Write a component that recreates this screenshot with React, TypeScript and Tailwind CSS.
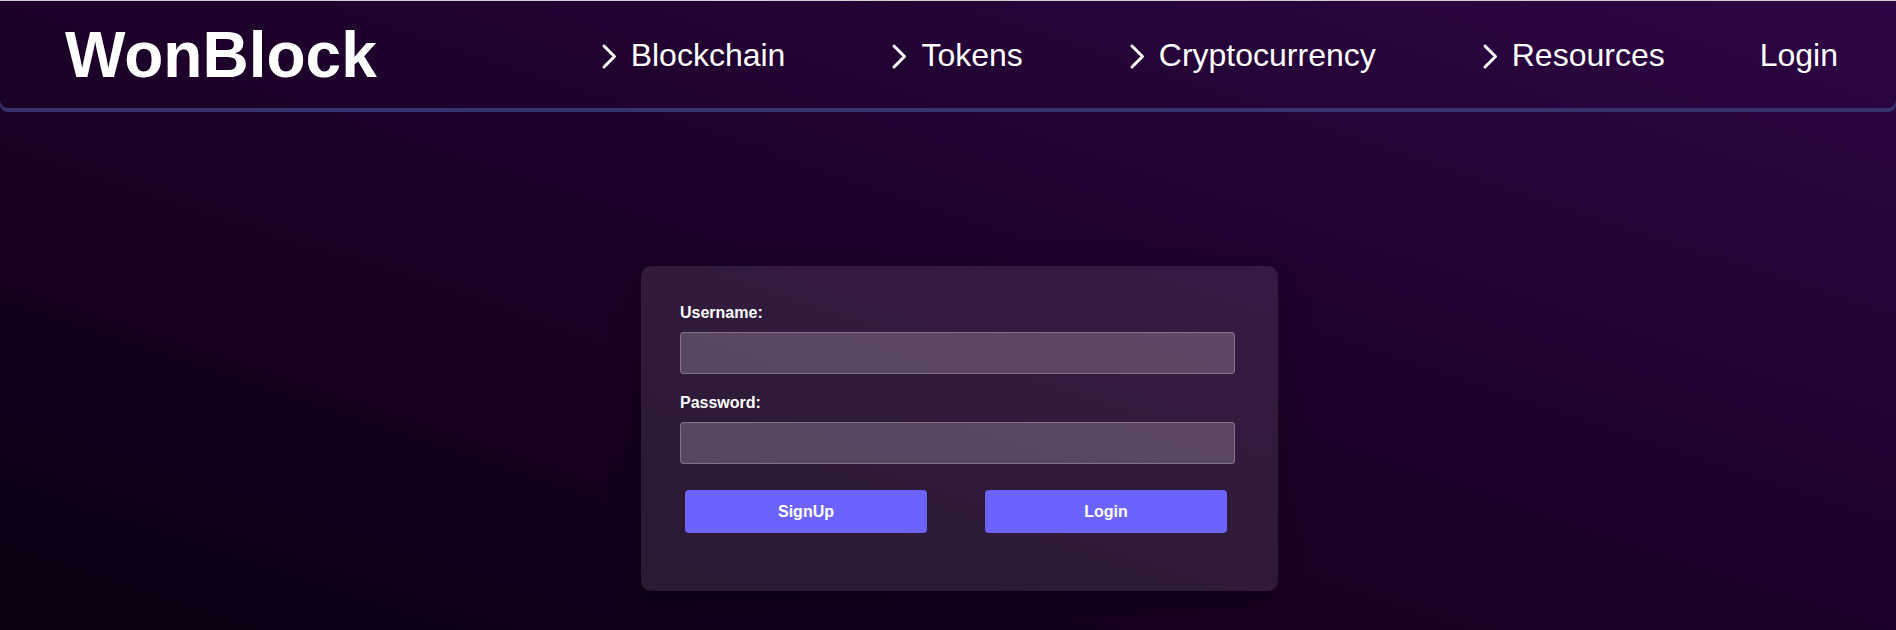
import React from 'react';

const navItems = ['Blockchain', 'Tokens', 'Cryptocurrency', 'Resources'];

const Chevron: React.FC = () => (
  <svg width="16" height="27" viewBox="0 0 16 27" fill="none" className="mt-[3px] shrink-0">
    <path d="M3 3 L13.5 13.5 L3 24" stroke="white" strokeWidth="3" strokeLinecap="round" strokeLinejoin="round" />
  </svg>
);

export default function App() {
  return (
    <div
      className="h-[630px] w-full overflow-hidden border-t border-[#cfcfcf] bg-[linear-gradient(to_top_right,#0a0010_0%,#1c0029_50%,#2e0645_100%)] text-white"
      style={{ fontFamily: '"Liberation Sans", Arial, sans-serif' }}
    >
      <nav className="flex h-[107px] items-center rounded-b-lg pl-[65px] pr-[58px] shadow-[0_4px_0_#38336f]">
        <h1 className="text-[64px] font-bold leading-none tracking-normal">WonBlock</h1>
        <ul className="ml-auto flex items-center gap-[106px] text-[32px] leading-none">
          {navItems.map((item) => (
            <li key={item} className="flex items-center gap-[14px]">
              <Chevron />
              <span>{item}</span>
            </li>
          ))}
          <li className="-ml-[11px]">Login</li>
        </ul>
      </nav>

      <main className="flex justify-center pl-[23px] pt-[158px]">
        <div className="w-[637px] rounded-[10px] bg-white/10 px-[39px] pb-[58px] pt-[38px] shadow-[0_8px_30px_rgba(0,0,0,0.35)]">
          <form className="flex flex-col">
            <label className="text-[16px] font-bold leading-[18px]">Username:</label>
            <input
              type="text"
              className="mt-[10px] h-[42px] w-[555px] rounded-[4px] border border-white/25 bg-white/20 px-3 outline-none"
            />
            <label className="mt-[20px] text-[16px] font-bold leading-[18px]">Password:</label>
            <input
              type="password"
              className="mt-[10px] h-[42px] w-[555px] rounded-[4px] border border-white/25 bg-white/20 px-3 outline-none"
            />
            <div className="mt-[26px] flex gap-[58px] pl-[5px]">
              <button type="button" className="h-[43px] w-[242px] rounded-[4px] bg-[#6c63ff] text-[16px] font-bold text-white">
                SignUp
              </button>
              <button type="button" className="h-[43px] w-[242px] rounded-[4px] bg-[#6c63ff] text-[16px] font-bold text-white">
                Login
              </button>
            </div>
          </form>
        </div>
      </main>
    </div>
  );
}
